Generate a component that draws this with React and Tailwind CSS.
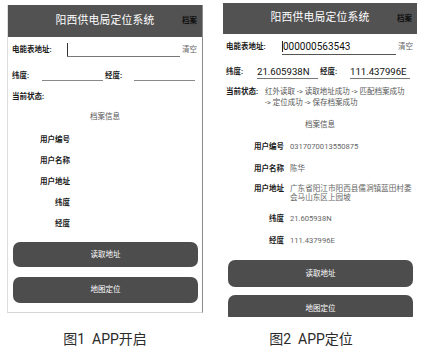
import React from 'react';

const font = { fontFamily: 'Roboto, "Noto Sans CJK SC", sans-serif' };

const Header = ({ h }) => (
  <div className={`relative flex shrink-0 items-center justify-center bg-[#525252] ${h}`}>
    <span className="text-[10.8px] text-white tracking-[0.2px]">阳西供电局定位系统</span>
    <span className="absolute right-[5px] text-[7.5px] font-bold text-[#111]">档案</span>
  </div>
);

const ActionButton = ({ label, h }) => (
  <div className={`flex w-[185px] shrink-0 items-center justify-center rounded-[7px] bg-[#4d4d4d] text-[7.5px] text-white ${h}`}>
    {label}
  </div>
);

const InfoRow = ({ label, value, h = 'h-[21px]' }) => (
  <div className={`flex items-center ${h}`}>
    <span className="w-[58px] text-right text-[7.5px] font-bold text-[#1a1a1a]">{label}</span>
    {value && <span className="ml-[6px] text-[7.6px] text-[#666]">{value}</span>}
  </div>
);

const StartPhone = () => (
  <div className="h-[308px] w-[196px] border-b border-l border-r border-b-[#d6d6d6] border-l-[#dcdcdc] border-r-[#8c8c8c] bg-white">
    <Header h="h-[32px]" />
    <div className="flex flex-col pl-[4px]">
      <div className="flex h-[26px] items-center">
        <span className="w-[55px] text-[7.5px] font-bold text-[#1a1a1a]">电能表地址:</span>
        <div className="h-[14px] w-[113px] border-b border-[#777]">
          <div className="h-full w-px bg-[#333]" />
        </div>
        <span className="ml-[2px] text-[7.5px] text-[#666]">清空</span>
      </div>
      <div className="flex h-[26px] items-center">
        <span className="w-[30px] text-[7.5px] font-bold text-[#1a1a1a]">纬度:</span>
        <div className="h-[10px] w-[61px] border-b border-[#888]" />
        <span className="ml-[2px] w-[29px] text-[7.5px] font-bold text-[#1a1a1a]">经度:</span>
        <div className="h-[10px] w-[61px] border-b border-[#888]" />
      </div>
      <div className="flex h-[16px] items-center">
        <span className="text-[7.5px] font-bold text-[#1a1a1a]">当前状态:</span>
      </div>
      <div className="flex h-[24px] items-center justify-center pr-[4px] text-[7.5px] text-[#555]">档案信息</div>
      <InfoRow label="用户编号" />
      <InfoRow label="用户名称" />
      <InfoRow label="用户地址" />
      <InfoRow label="纬度" />
      <InfoRow label="经度" />
      <div className="mt-[8px] flex flex-col gap-[10px] pl-[1px]">
        <ActionButton label="读取地址" h="h-[25px]" />
        <ActionButton label="地图定位" h="h-[26px]" />
      </div>
    </div>
  </div>
);

const LocatedPhone = () => (
  <div className="h-[314px] w-[194px] overflow-hidden bg-white">
    <Header h="h-[31px]" />
    <div className="flex flex-col pl-[3px]">
      <div className="flex h-[26px] items-center">
        <span className="w-[56px] text-[7.5px] font-bold text-[#1a1a1a]">电能表地址:</span>
        <div className="flex h-[16px] w-[114px] items-center border-b border-[#555]">
          <div className="h-[11px] w-px bg-[#222]" />
          <span className="text-[10px] leading-none text-[#111]">000000563543</span>
        </div>
        <span className="ml-[2px] text-[7.5px] text-[#666]">清空</span>
      </div>
      <div className="flex h-[24px] items-center">
        <span className="w-[31px] text-[7.5px] font-bold text-[#1a1a1a]">纬度:</span>
        <div className="flex h-[14px] w-[61px] items-center border-b border-[#777]">
          <span className="text-[9.6px] leading-none text-[#111]">21.605938N</span>
        </div>
        <span className="ml-[2px] w-[30px] text-[7.5px] font-bold text-[#1a1a1a]">经度:</span>
        <div className="flex h-[14px] w-[60px] items-center border-b border-[#777]">
          <span className="text-[9.6px] leading-none text-[#111]">111.437996E</span>
        </div>
      </div>
      <div className="flex pt-[2px] text-[7.5px] leading-[11px]">
        <span className="w-[39px] font-bold text-[#1a1a1a]">当前状态:</span>
        <div className="flex flex-col whitespace-nowrap text-[#555]">
          <span>红外读取 -&gt; 读取地址成功 -&gt; 匹配档案成功</span>
          <span>-&gt; 定位成功 -&gt; 保存档案成功</span>
        </div>
      </div>
      <div className="mt-[6px] flex h-[22px] items-center justify-center pr-[3px] text-[7.5px] text-[#555]">档案信息</div>
      <InfoRow label="用户编号" value="0317070013550875" h="h-[22px]" />
      <InfoRow label="用户名称" value="陈华" h="h-[22px]" />
      <div className="flex h-[28px] items-start pt-[4px] leading-[9px]">
        <span className="w-[58px] text-right text-[7.5px] font-bold text-[#1a1a1a]">用户地址</span>
        <span className="ml-[6px] w-[125px] text-[7.6px] text-[#666]">广东省阳江市阳西县儒洞镇蓝田村委会马山东区上园坡</span>
      </div>
      <InfoRow label="纬度" value="21.605938N" h="h-[22px]" />
      <InfoRow label="经度" value="111.437996E" h="h-[22px]" />
      <div className="mt-[8px] flex flex-col gap-[8px] pl-[2px]">
        <ActionButton label="读取地址" h="h-[27px]" />
        <ActionButton label="地图定位" h="h-[27px]" />
      </div>
    </div>
  </div>
);

const Caption = ({ children, className = '' }) => (
  <div className={`flex justify-center whitespace-pre text-[14px] leading-[16px] text-[#2a2a2a] ${className}`}>
    {children}
  </div>
);

export default function App() {
  return (
    <div className="flex h-[351px] w-[432px] overflow-hidden bg-white" style={font}>
      <div className="ml-[7px] mt-[5px] flex flex-col">
        <StartPhone />
        <Caption className="mt-[18px]">图1  APP开启</Caption>
      </div>
      <div className="ml-[20px] mt-[3px] flex flex-col">
        <LocatedPhone />
        <Caption className="mt-[14px] pr-[18px]">图2  APP定位</Caption>
      </div>
    </div>
  );
}
